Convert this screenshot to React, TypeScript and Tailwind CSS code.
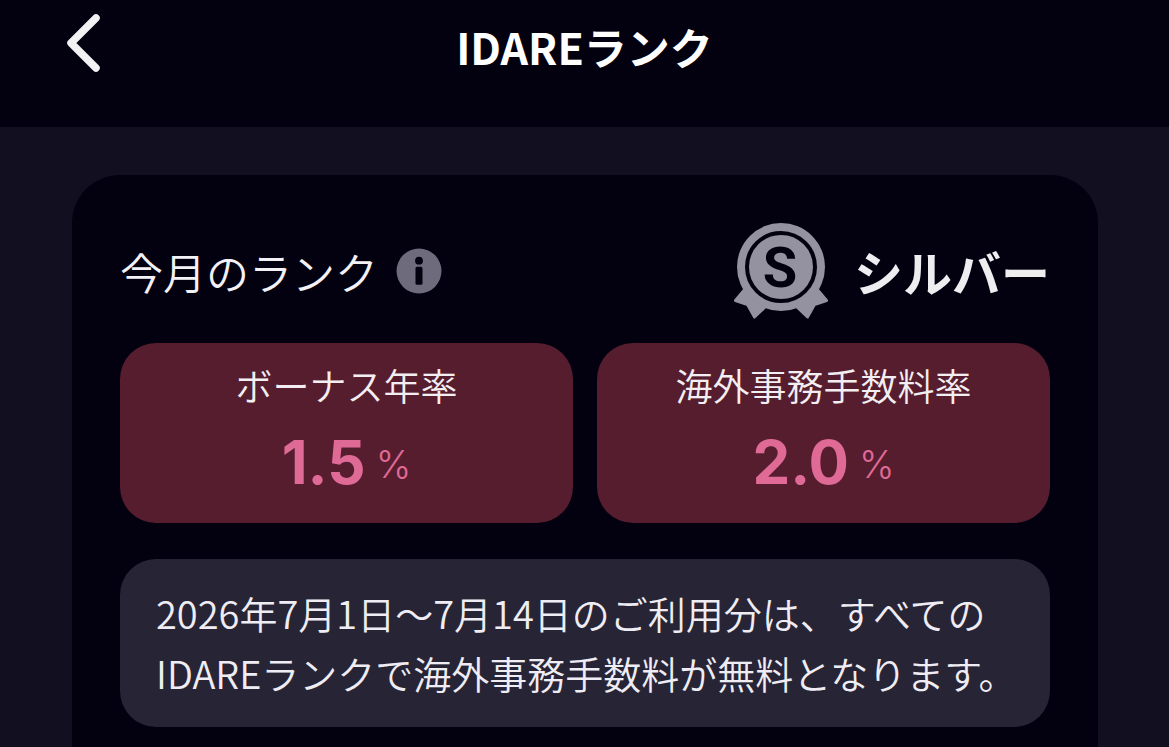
import React from "react";

function BackIcon() {
  return (
    <svg viewBox="0 0 36 60" className="h-15 w-9" fill="none" aria-hidden="true">
      <path d="M32 6 L7 31 L32 56" stroke="#f2f1f4" strokeWidth="7.5" strokeLinecap="round" strokeLinejoin="round" />
    </svg>
  );
}

function InfoIcon() {
  return (
    <svg viewBox="0 0 46 46" className="size-[46px]" aria-hidden="true">
      <circle cx="23" cy="23" r="22.5" fill="#6e6b7c" />
      <circle cx="23" cy="12.7" r="3.9" fill="#03000f" />
      <rect x="19.5" y="18.8" width="7" height="18" rx="1.6" fill="#03000f" />
    </svg>
  );
}

function SilverBadge() {
  return (
    <svg viewBox="0 0 96 96" className="size-24" role="img" aria-label="S">
      <g fill="#9491a0" stroke="#9491a0" strokeWidth="3" strokeLinejoin="round">
        <path d="M13 65 L2.5 77.5 L14.5 81.5 L21.5 94 L32 84 Z" />
        <path d="M83 65 L93.500 77.5 L81.500 81.5 L74.500 94 L64 84 Z" />
      </g>
      <circle cx="48" cy="44" r="44" fill="#9491a0" />
      <circle cx="48" cy="44" r="34" fill="none" stroke="#03000f" strokeWidth="4" />
      <text x="47" y="64" textAnchor="middle" fontSize="56" fontWeight="700" fill="#03000f" className="font-['Roboto',sans-serif]">
        S
      </text>
    </svg>
  );
}

function RateCard({ label, value }: { label: string; value: string }) {
  return (
    <section className="flex h-45 flex-col items-center rounded-[36px] bg-[#561d2f] pt-4">
      <h2 className="text-[37px] leading-13 font-[350] text-[#f3eef1]">{label}</h2>
      <p className="mt-4 flex items-start gap-[10px] font-['Inter',sans-serif] text-[#e06a96]">
        <span className="text-[60px] leading-[70px] font-[650]">{value}</span>
        <span className="text-[38px] leading-[74px] font-light">%</span>
      </p>
    </section>
  );
}

export default function App() {
  return (
    <div className="flex min-h-screen flex-col bg-[#110f20] font-['Noto_Sans_CJK_JP',sans-serif]">
      <header className="grid h-[127px] grid-cols-[1fr_auto_1fr] items-start bg-[#03000f] px-16 pt-3">
        <button type="button" aria-label="戻る" className="justify-self-start">
          <BackIcon />
        </button>
        <h1 className="text-[43px] leading-17 font-bold text-white">IDAREランク</h1>
      </header>
      <main className="flex flex-1 flex-col pt-12 pr-[71px] pl-[72px]">
        <div className="flex flex-1 flex-col rounded-t-[48px] bg-[#03000f] px-12 pt-12 pb-5">
          <div className="flex h-24 items-center justify-between">
            <div className="flex items-center gap-[18px]">
              <p className="text-[43px] leading-16 font-[350] text-[#f3f1f5]">今月のランク</p>
              <button type="button" aria-label="ランクについて">
                <InfoIcon />
              </button>
            </div>
            <div className="flex items-center gap-[25px]">
              <SilverBadge />
              <p className="text-[49px] leading-16 font-bold text-[#eeedef]">シルバー</p>
            </div>
          </div>
          <div className="mt-6 grid grid-cols-2 gap-6">
            <RateCard label="ボーナス年率" value="1.5" />
            <RateCard label="海外事務手数料率" value="2.0" />
          </div>
          <p className="mt-9 rounded-[36px] bg-[#272436] py-6 pr-6 pl-9 text-[38px] leading-[60px] font-[350] text-[#efedf3]">
            2026年7月1日〜7月14日のご利用分は、すべての
            <br />
            IDAREランクで海外事務手数料が無料となります。
          </p>
        </div>
      </main>
    </div>
  );
}
